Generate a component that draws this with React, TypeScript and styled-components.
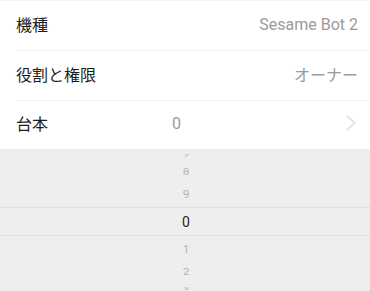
import React from "react";
import styled, { createGlobalStyle } from "styled-components";

const GlobalStyle = createGlobalStyle`
  html, body {
    margin: 0;
    padding: 0;
    background: #ffffff;
  }
  body {
    font-family: Roboto, "Noto Sans CJK JP", sans-serif;
    -webkit-font-smoothing: antialiased;
  }
`;

const Screen = styled.div`
  width: 370px;
  height: 291px;
  display: flex;
  flex-direction: column;
  overflow: hidden;
  background: #ffffff;
`;

const List = styled.div`
  display: flex;
  flex-direction: column;
  border-top: 1px solid #f6f6f6;
`;

const Row = styled.div<{ $divider?: boolean }>`
  height: ${(p) => (p.$divider ? 50 : 48)}px;
  box-sizing: border-box;
  display: flex;
  align-items: center;
  padding: 0 12px 4px 16px;
  position: relative;
  &::after {
    content: "";
    display: ${(p) => (p.$divider ? "block" : "none")};
    position: absolute;
    left: 16px;
    right: 0;
    bottom: 0;
    height: 1px;
    background: #f1f1f1;
  }
`;

const Label = styled.span`
  font-family: "Noto Sans CJK JP", sans-serif;
  font-size: 16px;
  color: #1c1c1c;
  flex: 0 0 auto;
`;

const Value = styled.span`
  margin-left: auto;
  font-family: Roboto, "Noto Sans CJK JP", sans-serif;
  font-size: 16px;
  color: #9a9a9a;
`;

const CountValue = styled.span`
  font-family: Roboto, sans-serif;
  font-size: 16px;
  color: #9a9a9a;
  margin-left: 124px;
`;

const Chevron = styled.svg`
  margin-left: auto;
  width: 14px;
  height: 16px;
`;

const Picker = styled.div`
  flex: 1;
  background: #eeeeee;
  display: flex;
  flex-direction: column;
  align-items: center;
  overflow: hidden;
`;

const Item = styled.div<{ $h: number; $scale: number; $selected?: boolean }>`
  flex: 0 0 ${(p) => p.$h}px;
  width: 100%;
  display: flex;
  align-items: center;
  justify-content: center;
  box-sizing: border-box;
  font-family: Roboto, sans-serif;
  font-size: ${(p) => (p.$selected ? 14 : 12)}px;
  color: ${(p) => (p.$selected ? "#222222" : "#b4b4b4")};
  border-top: ${(p) => (p.$selected ? "1px solid #e0e0e0" : "none")};
  border-bottom: ${(p) => (p.$selected ? "1px solid #e0e0e0" : "none")};
  span {
    display: inline-block;
    transform: scaleY(${(p) => p.$scale});
    padding-left: 2px;
  }
`;

const wheel = [
  { n: "7", h: 14, s: 0.35 },
  { n: "8", h: 18, s: 0.8 },
  { n: "9", h: 26, s: 0.95 },
  { n: "0", h: 29, s: 1, sel: true },
  { n: "1", h: 26, s: 0.95 },
  { n: "2", h: 20, s: 0.8 },
  { n: "3", h: 14, s: 0.35 },
];

export default function App() {
  return (
    <>
      <GlobalStyle />
      <Screen>
        <List>
          <Row $divider>
            <Label>機種</Label>
            <Value>Sesame Bot 2</Value>
          </Row>
          <Row $divider>
            <Label>役割と権限</Label>
            <Value>オーナー</Value>
          </Row>
          <Row>
            <Label>台本</Label>
            <CountValue>0</CountValue>
            <Chevron viewBox="0 0 14 16">
              <path d="M2.5 0.8 L11 8 L2.5 15.2" fill="none" stroke="#dadada" strokeWidth="1.3" />
            </Chevron>
          </Row>
        </List>
        <Picker>
          {wheel.map((w) => (
            <Item key={w.n} $h={w.h} $scale={w.s} $selected={w.sel}>
              <span>{w.n}</span>
            </Item>
          ))}
        </Picker>
      </Screen>
    </>
  );
}
